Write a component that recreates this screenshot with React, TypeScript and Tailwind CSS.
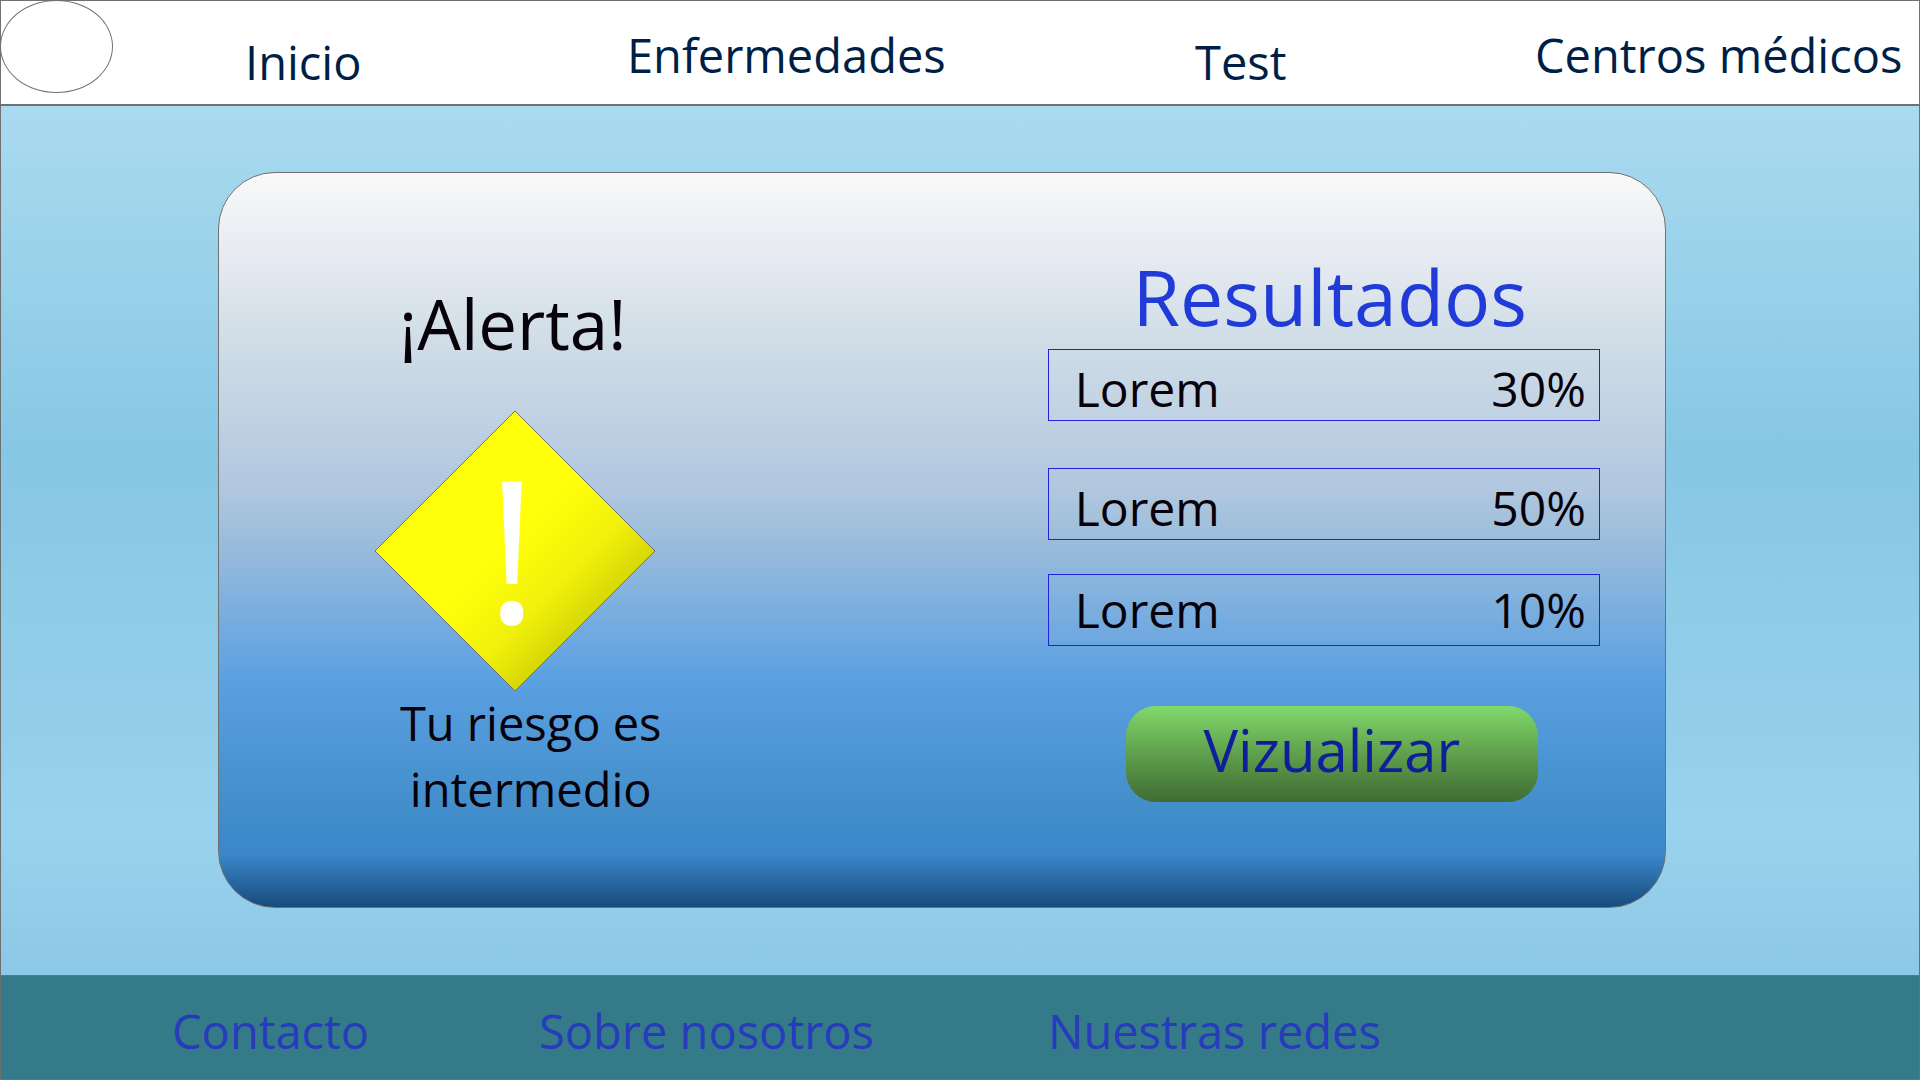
const navLinks = [
  { label: "Inicio", align: "self-end" },
  { label: "Enfermedades", align: "self-center" },
  { label: "Test", align: "self-end" },
  { label: "Centros médicos", align: "self-center" },
];

const results = [
  { name: "Lorem", value: "30%", row: "items-end mb-[47px]" },
  { name: "Lorem", value: "50%", row: "items-end mb-[34px]" },
  { name: "Lorem", value: "10%", row: "items-center mb-[60px]" },
];

const footerLinks = ["Contacto", "Sobre nosotros", "Nuestras redes"];

function Header() {
  return (
    <header className="flex h-[105px] border-b-2 border-[#707070] bg-white">
      <a
        href="#"
        aria-label="Logo"
        className="-mt-px -ml-px h-[93px] w-[113px] shrink-0 rounded-[50%] border border-[#707070]"
      />
      <nav className="grid flex-1 grid-cols-[132fr_382fr_568fr_340fr_384fr] pt-[5px] text-[47px] leading-[84px] text-[#001f46]">
        <span />
        {navLinks.map((link) => (
          <a key={link.label} href="#" className={`whitespace-nowrap ${link.align}`}>
            {link.label}
          </a>
        ))}
      </nav>
    </header>
  );
}

function WarningSign() {
  return (
    <svg viewBox="0 0 282 282" className="mt-[42px] size-[282px]" role="img" aria-label="Alerta">
      <defs>
        <linearGradient id="sign" x1="0.25" y1="0.25" x2="0.75" y2="0.75">
          <stop offset="0" stopColor="#ffff0a" />
          <stop offset="0.45" stopColor="#ffff0a" />
          <stop offset="0.78" stopColor="#f0f00a" />
          <stop offset="1" stopColor="#d7d705" />
        </linearGradient>
      </defs>
      <path d="M141 1 281 141 141 281 1 141Z" fill="url(#sign)" stroke="#707070" />
      <text x="138" y="213" textAnchor="middle" fontSize="198" fill="#fff">
        !
      </text>
    </svg>
  );
}

function AlertPanel() {
  return (
    <section className="flex flex-col items-center pt-[105px] text-[#070109]">
      <h1 className="pr-1 text-[69px] leading-[90px]">¡Alerta!</h1>
      <WarningSign />
      <p className="-mt-0.5 pl-8 text-center text-[47px] leading-[66px]">
        Tu riesgo es
        <br />
        intermedio
      </p>
    </section>
  );
}

function ResultsPanel() {
  return (
    <section className="col-start-3 flex flex-col pt-[72px]">
      <h2 className="pl-3 text-center text-[77px] leading-[104px] text-[#213bd9]">Resultados</h2>
      <ul className="text-[48px] leading-[62px] text-[#070109]">
        {results.map((item) => (
          <li
            key={item.value}
            className={`flex h-[72px] justify-between border border-[#2222dd] pr-[13px] pl-[26px] ${item.row}`}
          >
            <span>{item.name}</span>
            <span>{item.value}</span>
          </li>
        ))}
      </ul>
      <div className="flex justify-center pl-4">
        <button
          type="button"
          className="h-24 w-[412px] rounded-[30px] bg-linear-to-b from-[#82d96b] via-[#62a54f] via-45% to-[#406c33] pb-2 text-[58px] leading-[80px] text-[#0f1f9c]"
        >
          Vizualizar
        </button>
      </div>
    </section>
  );
}

function Footer() {
  return (
    <footer className="grid grid-cols-[171fr_367fr_509fr_871fr] border-t border-[#707070] bg-[#357a88] pt-[15px] pb-2 text-[47px] leading-[80px] text-[#273bbd]">
      <span />
      {footerLinks.map((label) => (
        <a key={label} href="#" className="whitespace-nowrap">
          {label}
        </a>
      ))}
    </footer>
  );
}

export default function App() {
  return (
    <div className="flex min-h-screen flex-col border border-[#707070] bg-[linear-gradient(180deg,#b4e0f4_0%,#aadaf0_10%,#a2d6ec_17%,#98d1ea_26%,#86c7e4_42%,#99d2ec_77%,#8bc8e7_91%)] font-['Open_Sans',sans-serif]">
      <Header />
      <main className="flex flex-1 pt-[66px] pr-[13.2%] pb-[67px] pl-[11.3%]">
        <div className="grid flex-1 grid-cols-[592fr_237fr_552fr_65fr] rounded-[57px] border border-[#707070] bg-[linear-gradient(180deg,#f9f9f8_0%,#e5eaf1_12%,#d3dfe8_21%,#b1c7df_43%,#a2c0db_48%,#5ba0e1_69%,#438ecb_86%,#3a86c8_93%,#174b7b_100%)]">
          <AlertPanel />
          <ResultsPanel />
        </div>
      </main>
      <Footer />
    </div>
  );
}
